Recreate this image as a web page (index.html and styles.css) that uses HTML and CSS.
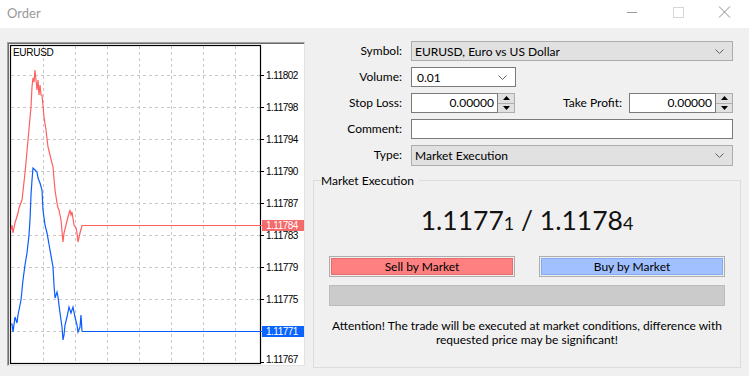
FILE: index.html
```html
<!DOCTYPE html>
<html>
<head>
<meta charset="utf-8">
<link rel="stylesheet" href="styles.css">
</head>
<body>
<div class="window">
  <header class="titlebar">
    <span class="title">Order</span>
    <div class="controls">
      <svg class="ctl" width="46" height="28" viewBox="0 0 46 28"><line x1="18" y1="12.5" x2="28" y2="12.5" stroke="#999" stroke-width="1"/></svg>
      <svg class="ctl" width="46" height="28" viewBox="0 0 46 28"><rect x="18.5" y="7.5" width="10" height="10" fill="none" stroke="#d6d6d6" stroke-width="1"/></svg>
      <svg class="ctl" width="46" height="28" viewBox="0 0 46 28"><path d="M18 6.5 L29 17.5 M29 6.5 L18 17.5" stroke="#8c8c8c" stroke-width="1"/></svg>
    </div>
  </header>
  <main class="body">
    <section class="chart">
      <svg width="296" height="322" viewBox="0 0 296 322">
        <g transform="translate(-8,-43)">
          <g class="grid" stroke="#c8c8c8" stroke-width="1" stroke-dasharray="3 3">
            <line x1="43.5" y1="46" x2="43.5" y2="364"/>
            <line x1="75.5" y1="46" x2="75.5" y2="364"/>
            <line x1="107.5" y1="46" x2="107.5" y2="364"/>
            <line x1="139.5" y1="46" x2="139.5" y2="364"/>
            <line x1="171.5" y1="46" x2="171.5" y2="364"/>
            <line x1="203.5" y1="46" x2="203.5" y2="364"/>
            <line x1="235.5" y1="46" x2="235.5" y2="364"/>
            <line x1="11" y1="75.5" x2="260" y2="75.5"/>
            <line x1="11" y1="107.5" x2="260" y2="107.5"/>
            <line x1="11" y1="139.5" x2="260" y2="139.5"/>
            <line x1="11" y1="171.5" x2="260" y2="171.5"/>
            <line x1="11" y1="203.5" x2="260" y2="203.5"/>
            <line x1="11" y1="235.5" x2="260" y2="235.5"/>
            <line x1="11" y1="267.5" x2="260" y2="267.5"/>
            <line x1="11" y1="299.5" x2="260" y2="299.5"/>
            <line x1="11" y1="331.5" x2="260" y2="331.5"/>
          </g>
          <g stroke="#000" stroke-width="1">
            <line x1="260" y1="75.5" x2="264" y2="75.5"/>
            <line x1="260" y1="107.5" x2="264" y2="107.5"/>
            <line x1="260" y1="139.5" x2="264" y2="139.5"/>
            <line x1="260" y1="171.5" x2="264" y2="171.5"/>
            <line x1="260" y1="203.5" x2="264" y2="203.5"/>
            <line x1="260" y1="235.5" x2="264" y2="235.5"/>
            <line x1="260" y1="267.5" x2="264" y2="267.5"/>
            <line x1="260" y1="299.5" x2="264" y2="299.5"/>
            <line x1="260" y1="362.5" x2="264" y2="362.5"/>
          </g>
          <rect x="10.5" y="45.5" width="250" height="318" fill="none" stroke="#000" stroke-width="1.2"/>
          <text class="sym" x="13" y="56">EURUSD</text>
          <g class="axis">
            <text x="266" y="79">1.11802</text>
            <text x="266" y="111">1.11798</text>
            <text x="266" y="143">1.11794</text>
            <text x="266" y="175">1.11790</text>
            <text x="266" y="207">1.11787</text>
            <text x="266" y="239">1.11783</text>
            <text x="266" y="271">1.11779</text>
            <text x="266" y="303">1.11775</text>
            <text x="266" y="362.5">1.11767</text>
          </g>
          <polyline fill="none" stroke="#ff5f5f" stroke-width="1.2" points="11,230 12,225 13,233 15,223 18,213 19,208 22,200 25,173 28,140 31,107 32,87 33,78 34,82 35,70 36,80 37,90 38,80 39,95 40,85 41,95 42,95 44,117 46,130 48,147 50,155 53,167 55,190 57,203 58,208 59,210 61,220 63,242 64,233 66,225 68,217 70,210 71,215 72,212 74,225 76,228 77,233 78,242 80,233 82,225.5"/>
          <line x1="82" y1="225.5" x2="262" y2="225.5" stroke="#ff5f5f" stroke-width="1" shape-rendering="crispEdges"/>
          <polyline fill="none" stroke="#0a5cff" stroke-width="1.2" points="11,324 12,324 13,332 15,317 17,323 18,315 21,300 23,280 25,265 27,253 29,235 30,220 31,195 32,180 33,168 35,170 37,172 38,178 40,183 42,190 43,210 45,225 47,233 50,250 53,267 54,285 55,298 57,292 58,297 60,313 62,327 63,340 64,335 65,325 67,317 69,307 71,313 73,307 75,317 77,325 78,332 80,327 81,315 82,331.5"/>
          <line x1="82" y1="331.5" x2="262" y2="331.5" stroke="#0a5cff" stroke-width="1" shape-rendering="crispEdges"/>
          <rect x="262" y="220" width="43" height="11" fill="#f56a6a"/>
          <text class="tag" x="266" y="229">1.11784</text>
          <rect x="262" y="326" width="43" height="11" fill="#0a64ff"/>
          <text class="tag" x="266" y="335">1.11771</text>
        </g>
      </svg>
    </section>
    <section class="form">
      <div class="fields">
        <label class="lbl">Symbol:</label>
        <div class="select gray">
          <span>EURUSD, Euro vs US Dollar</span>
          <svg class="chev" width="9" height="5" viewBox="0 0 9 5"><path d="M0.5 0.5 L4.5 4.5 L8.5 0.5" fill="none" stroke="#606060" stroke-width="1"/></svg>
        </div>
        <label class="lbl">Volume:</label>
        <div class="row">
          <div class="select white vol">
            <span>0.01</span>
            <svg class="chev" width="9" height="5" viewBox="0 0 9 5"><path d="M0.5 0.5 L4.5 4.5 L8.5 0.5" fill="none" stroke="#606060" stroke-width="1"/></svg>
          </div>
        </div>
        <label class="lbl">Stop Loss:</label>
        <div class="row">
          <div class="spin">
            <div class="spin-field">0.00000</div>
            <div class="spin-btns">
              <div class="sb"><svg width="7" height="4" viewBox="0 0 7 4"><path d="M3.5 0 L7 4 L0 4 Z" fill="#000"/></svg></div>
              <div class="sb"><svg width="7" height="4" viewBox="0 0 7 4"><path d="M0 0 L7 0 L3.5 4 Z" fill="#000"/></svg></div>
            </div>
          </div>
          <label class="lbl tp">Take Profit:</label>
          <div class="spin">
            <div class="spin-field">0.00000</div>
            <div class="spin-btns">
              <div class="sb"><svg width="7" height="4" viewBox="0 0 7 4"><path d="M3.5 0 L7 4 L0 4 Z" fill="#000"/></svg></div>
              <div class="sb"><svg width="7" height="4" viewBox="0 0 7 4"><path d="M0 0 L7 0 L3.5 4 Z" fill="#000"/></svg></div>
            </div>
          </div>
        </div>
        <label class="lbl">Comment:</label>
        <div class="input"></div>
        <label class="lbl">Type:</label>
        <div class="select gray type">
          <span>Market Execution</span>
          <svg class="chev" width="9" height="5" viewBox="0 0 9 5"><path d="M0.5 0.5 L4.5 4.5 L8.5 0.5" fill="none" stroke="#606060" stroke-width="1"/></svg>
        </div>
      </div>
      <fieldset class="group">
        <legend>Market Execution</legend>
        <div class="price">1.1177<small>1</small> / 1.1178<small>4</small></div>
        <div class="buttons">
          <div class="btn sell"><span>Sell by Market</span></div>
          <div class="btn buy"><span>Buy by Market</span></div>
        </div>
        <div class="bar"></div>
        <p class="note">Attention! The trade will be executed at market conditions, difference with<br>requested price may be significant!</p>
      </fieldset>
    </section>
  </main>
</div>
</body>
</html>
```

FILE: styles.css
```css
* { box-sizing: border-box; }
html, body { margin: 0; padding: 0; }
body {
  width: 749px;
  height: 376px;
  overflow: hidden;
  background: #f0f0f0;
  font-family: Lato, "Liberation Sans", sans-serif;
  font-size: 12px;
  color: #000;
}
.window { width: 749px; height: 376px; display: flex; flex-direction: column; }
.titlebar {
  height: 28px;
  background: #fff;
  display: flex;
  align-items: center;
  justify-content: space-between;
}
.title { color: #999; font-size: 13px; padding-left: 7px; padding-bottom: 2px; }
.controls { display: flex; align-self: flex-start; margin-right: 2px; }
.ctl { display: block; }

.body {
  display: flex;
  padding: 13px 8px 0 7px;
  gap: 8px;
}
.chart {
  width: 298px;
  height: 324px;
  margin-top: 1px;
  background: #fff;
  border: 1px solid;
  border-color: #a0a0a0 #e3e3e3 #e3e3e3 #a0a0a0;
  box-shadow: inset 1px 1px 0 #6d6d6d;
}
.chart svg { display: block; }
.sym { font-family: "Liberation Sans", sans-serif; font-size: 10px; fill: #000; letter-spacing: -0.3px; }
.axis text, .tag { font-family: "Liberation Sans", sans-serif; font-size: 10px; letter-spacing: -0.5px; fill: #000; }
.tag { fill: #fff; }

.form { width: 428px; }
.fields {
  display: grid;
  grid-template-columns: 89px 322px;
  grid-auto-rows: 20px;
  column-gap: 9px;
  row-gap: 6px;
}
.lbl { text-align: right; line-height: 20px; white-space: nowrap; }
.row { display: flex; align-items: stretch; }
.select {
  display: flex;
  align-items: center;
  justify-content: space-between;
  padding: 0 8px 0 3px;
  border: 1px solid #adadad;
}
.select.gray { background: #e1e1e1; }
.select.white { background: #fff; border-color: #7a7a7a; }
.select.vol { width: 105px; padding-left: 5px; }
.select.type { height: 21px; }
.chev { display: block; }
.spin { display: flex; width: 104px; }
.spin-field {
  flex: 1;
  background: #fff;
  border: 1px solid #7a7a7a;
  text-align: right;
  padding-right: 3px;
  line-height: 18px;
}
.spin-btns {
  width: 17px;
  display: flex;
  flex-direction: column;
  border: 1px solid #adadad;
  border-left: none;
  background: #e1e1e1;
}
.sb { flex: 1; display: flex; align-items: center; justify-content: center; }
.sb + .sb { border-top: 1px solid #adadad; }
.tp { flex: 1; margin-right: 7px; }
.input { background: #fff; border: 1px solid #7a7a7a; }

.group {
  margin: 8px 0 0 0;
  padding: 0 15px;
  height: 195px;
  border: 1px solid #dcdcdc;
  min-width: 0;
}
.group legend { padding: 0 5px 0 0; margin-left: -8px; font-size: 12px; }
.price {
  text-align: center;
  font-size: 26.5px;
  line-height: 28px;
  margin-top: 18px;
  color: #111;
}
.price small { font-size: 18px; }
.buttons { display: flex; gap: 24px; margin-top: 19px; }
.btn {
  flex: 1;
  height: 21px;
  border: 1px solid #adadad;
  padding: 1px;
  display: flex;
}
.btn span {
  flex: 1;
  display: flex;
  align-items: center;
  justify-content: center;
}
.sell span { background: #ff8080; border: 1px solid #e86c6c; }
.buy span { background: #a0c0ff; border: 1px solid #88a8f0; }
.bar {
  margin-top: 8px;
  height: 21px;
  background: #cbcbcb;
  border: 1px solid #bcbcbc;
}
.note { margin: 13px 0 0; text-align: center; line-height: 14px; }
```
